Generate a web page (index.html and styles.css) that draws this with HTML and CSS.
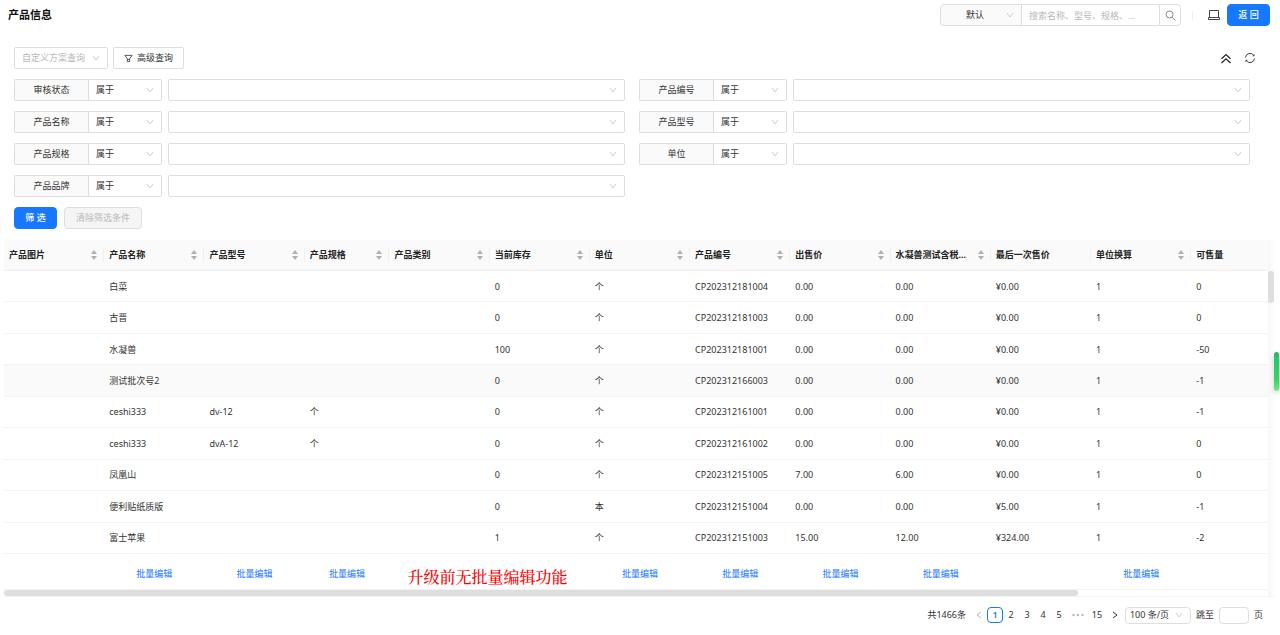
FILE: index.html
```html
<!DOCTYPE html>
<html lang="zh-CN">
<head>
    <meta charset="UTF-8">
    <meta name="viewport" content="width=device-width, initial-scale=1.0">
    <title>产品信息</title>
    <link rel="stylesheet" href="styles.css">
</head>
<body>
    <header class="page-header">
        <h1>产品信息</h1>
        <div class="header-actions">
            <form class="search">
                <select class="select search-type" aria-label="搜索类型">
                    <option>默认</option>
                </select>
                <input class="search-input" type="text" aria-label="搜索" placeholder="搜索名称、型号、规格、...">
                <button class="search-btn" type="button" aria-label="搜索">
                    <svg width="11" height="11" viewBox="0 0 11 11" fill="none" stroke="#888"><circle cx="4.5" cy="4.5" r="3.5"/><path d="M7 7l3.5 3.5"/></svg>
                </button>
            </form>
            <span class="divider"></span>
            <button class="icon-btn" type="button" aria-label="显示设置">
                <svg width="12" height="12" viewBox="0 0 12 12" fill="none" stroke="#444"><path d="M1.5 8.5v-7h9v7M.5 8.500h11v2H.5z"/></svg>
            </button>
            <button class="btn btn-primary" type="button">返 回</button>
        </div>
    </header>

    <section class="filters">
        <div class="filter-bar">
            <select class="select scheme" aria-label="自定义方案查询">
                <option>自定义方案查询</option>
            </select>
            <button class="btn btn-square" type="button">
                <svg width="9" height="9" viewBox="0 0 10 10" fill="none" stroke="#444"><path d="M1 1.500h8L6.300 5.300v3.200H3.700V5.300zM3.700 6h2.600"/></svg>
                高级查询
            </button>
            <div class="filter-tools">
                <button class="icon-btn" type="button" aria-label="收起">
                    <svg width="12" height="12" viewBox="0 0 12 12" fill="none" stroke="#222" stroke-width="1.200"><path d="M1.500 6.700L6 2.500l4.500 4.200M1.500 11L6 6.800l4.500 4.200"/></svg>
                </button>
                <button class="icon-btn" type="button" aria-label="刷新">
                    <svg width="12" height="12" viewBox="0 0 12 12" fill="none" stroke="#444"><path d="M1.500 5.500A4.500 4.500 0 0 1 9.800 3.500M10.500 6.500A4.500 4.500 0 0 1 2.200 8.500"/><path d="M10.500 1.800v2.400H8.200zM1.500 10.200V7.800h2.300z" fill="#444" stroke="none"/></svg>
                </button>
            </div>
        </div>

        <div class="filter-grid" id="filter-grid">
            <!-- Filter rows are added by the script -->
        </div>

        <div class="filter-submit">
            <button class="btn btn-primary" type="button">筛 选</button>
            <button class="btn btn-clear" type="button" disabled>清除筛选条件</button>
        </div>
    </section>

    <main class="table-wrap">
        <table class="products">
            <colgroup>
                <col span="3" class="col">
                <col class="col-narrow">
                <col span="8" class="col">
                <col>
            </colgroup>
            <thead>
                <tr id="table-head"></tr>
            </thead>
            <tbody id="table-body"></tbody>
            <tfoot>
                <tr>
                    <td></td>
                    <td><a href="#">批量编辑</a></td>
                    <td><a href="#">批量编辑</a></td>
                    <td><a href="#">批量编辑</a></td>
                    <td colspan="2" class="note">升级前无批量编辑功能</td>
                    <td><a href="#">批量编辑</a></td>
                    <td><a href="#">批量编辑</a></td>
                    <td><a href="#">批量编辑</a></td>
                    <td><a href="#">批量编辑</a></td>
                    <td></td>
                    <td><a href="#">批量编辑</a></td>
                    <td></td>
                </tr>
            </tfoot>
        </table>
        <div class="scroll-y"><span class="thumb"></span></div>
        <div class="scroll-x"><span class="thumb"></span></div>
    </main>

    <footer class="pagination">
        <span class="total">共1466条</span>
        <button class="page arrow off" type="button" aria-label="上一页" disabled>
            <svg width="6" height="8" viewBox="0 0 6 8" fill="none" stroke="currentColor"><path d="M5 1L1 4l4 3"/></svg>
        </button>
        <button class="page active" type="button">1</button>
        <button class="page" type="button">2</button>
        <button class="page" type="button">3</button>
        <button class="page" type="button">4</button>
        <button class="page" type="button">5</button>
        <button class="page more" type="button" aria-label="向后 5 页">
            <svg width="12" height="4" viewBox="0 0 12 4" fill="#bbb"><circle cx="1.500" cy="2" r="1.200"/><circle cx="6" cy="2" r="1.200"/><circle cx="10.500" cy="2" r="1.200"/></svg>
        </button>
        <button class="page" type="button">15</button>
        <button class="page arrow" type="button" aria-label="下一页">
            <svg width="6" height="8" viewBox="0 0 6 8" fill="none" stroke="currentColor"><path d="M1 1l4 3-4 3"/></svg>
        </button>
        <select class="select page-size" aria-label="每页条数">
            <option>100 条/页</option>
        </select>
        <label for="jump">跳至</label>
        <input class="jump" id="jump" type="text">
        <span>页</span>
    </footer>

    <div class="side-handle"></div>

    <script>
        const filters = ['审核状态', '产品编号', '产品名称', '产品型号', '产品规格', '单位', '产品品牌'];

        // [title, sortable]
        const columns = [
            ['产品图片', true], ['产品名称', true], ['产品型号', true], ['产品规格', true],
            ['产品类别', true], ['当前库存', true], ['单位', true], ['产品编号', true],
            ['出售价', true], ['水凝兽测试含税...', true], ['最后一次售价', false],
            ['单位换算', true], ['可售量', false]
        ];

        const rows = [
            ['', '白菜', '', '', '', '0', '个', 'CP202312181004', '0.00', '0.00', '¥0.00', '1', '0'],
            ['', '古晋', '', '', '', '0', '个', 'CP202312181003', '0.00', '0.00', '¥0.00', '1', '0'],
            ['', '水凝兽', '', '', '', '100', '个', 'CP202312181001', '0.00', '0.00', '¥0.00', '1', '-50'],
            ['', '测试批次号2', '', '', '', '0', '个', 'CP202312166003', '0.00', '0.00', '¥0.00', '1', '-1'],
            ['', 'ceshi333', 'dv-12', '个', '', '0', '个', 'CP202312161001', '0.00', '0.00', '¥0.00', '1', '-1'],
            ['', 'ceshi333', 'dvA-12', '个', '', '0', '个', 'CP202312161002', '0.00', '0.00', '¥0.00', '1', '0'],
            ['', '凤凰山', '', '', '', '0', '个', 'CP202312151005', '7.00', '6.00', '¥0.00', '1', '0'],
            ['', '便利贴纸质版', '', '', '', '0', '本', 'CP202312151004', '0.00', '0.00', '¥5.00', '1', '-1'],
            ['', '富士苹果', '', '', '', '1', '个', 'CP202312151003', '15.00', '12.00', '¥324.00', '1', '-2']
        ];
        const hoveredRow = 3;

        const sorter = '<svg class="sorter" width="6" height="10" viewBox="0 0 6 10" fill="#b0b0b0"><path d="M3 0l3 4H0zM3 10L0 6h6z"/></svg>';

        document.getElementById('filter-grid').innerHTML = filters.map((name, i) => `
            <div class="filter">
                <label for="filter-${i}">${name}</label>
                <select class="select operator" aria-label="${name}条件"><option>属于</option></select>
                <select class="select value" id="filter-${i}"><option></option></select>
            </div>`).join('');

        document.getElementById('table-head').innerHTML = columns.map(([title, sortable]) =>
            `<th><div class="th"><span>${title}</span>${sortable ? sorter : ''}</div></th>`).join('');

        document.getElementById('table-body').innerHTML = rows.map((row, i) =>
            `<tr${i === hoveredRow ? ' class="hover"' : ''}>${row.map(cell => `<td>${cell}</td>`).join('')}</tr>`).join('');
    </script>
</body>
</html>
```

FILE: styles.css
```css
/* styles.css */

* {
    box-sizing: border-box;
}

body {
    display: flex;
    flex-direction: column;
    height: 100vh;
    margin: 0;
    background-color: #fff;
    color: #333;
    font-family: "Noto Sans", "Noto Sans CJK SC", sans-serif;
    font-size: 9px;
    line-height: 14px;
}

button, input, select {
    font: inherit;
    color: inherit;
    margin: 0;
}

button {
    padding: 0;
    cursor: pointer;
}

svg {
    display: block;
    flex: none;
}

a {
    color: #1677ff;
    text-decoration: none;
}

/* Shared controls */
.select {
    height: 22px;
    padding: 0 20px 0 7px;
    border: 1px solid #dedede;
    border-radius: 2px;
    appearance: none;
    background: #fff url('data:image/svg+xml;charset=UTF-8,%3Csvg xmlns="http://www.w3.org/2000/svg" width="8" height="6" viewBox="0 0 8 6"%3E%3Cpath d="M1 1l3 4 3-4" fill="none" stroke="%23cccccc"/%3E%3C/svg%3E') no-repeat right 7px center;
}

.btn {
    display: flex;
    align-items: center;
    justify-content: center;
    gap: 4px;
    height: 22px;
    padding: 0 10px;
    border: 1px solid #dedede;
    border-radius: 4px;
    background-color: #fff;
}

.btn-square {
    border-radius: 2px;
}

.btn-primary {
    min-width: 43px;
    border-color: #1677ff;
    background-color: #1677ff;
    color: #fff;
    font-weight: 500;
}

.btn-clear {
    min-width: 78px;
    background-color: #f5f5f5;
    color: #b8b8b8;
    cursor: not-allowed;
}

.icon-btn {
    border: none;
    background: none;
}

/* Header */
.page-header {
    display: flex;
    align-items: center;
    justify-content: space-between;
    height: 30px;
    padding: 0 10px 0 8px;
}

h1 {
    margin: 0;
    color: #111;
    font-size: 11px;
    font-weight: 700;
}

.header-actions {
    display: flex;
    align-items: center;
}

.search {
    display: flex;
    width: 241px;
}

.search-type {
    width: 82px;
    padding: 0 20px 0 8px;
    border-radius: 4px 0 0 4px;
    background-color: #fafafa;
    text-align-last: center;
}

.search-input {
    flex: 1;
    min-width: 0;
    height: 22px;
    padding: 0 7px;
    border: solid #dedede;
    border-width: 1px 0;
}

.search-input::placeholder {
    color: #b8b8b8;
}

.search-btn {
    display: flex;
    align-items: center;
    justify-content: center;
    width: 22px;
    border: 1px solid #dedede;
    border-radius: 0 4px 4px 0;
    background-color: #fff;
}

.divider {
    width: 1px;
    height: 9px;
    margin: 0 15px 0 11px;
    background-color: #eee;
}

.header-actions .btn {
    margin-left: 7px;
}

/* Filters */
.filters {
    display: flex;
    flex-direction: column;
    gap: 10px;
    padding: 17px 30px 11px 14px;
}

.filter-bar {
    display: flex;
    gap: 5px;
}

.scheme {
    width: 94px;
    color: #b8b8b8;
}

.filter-tools {
    display: flex;
    align-items: center;
    gap: 12px;
    margin-left: auto;
    margin-right: -6px;
}

.filter-grid {
    display: grid;
    grid-template-columns: 1fr 1fr;
    gap: 10px 14px;
}

.filter {
    display: flex;
}

.filter label {
    width: 74px;
    padding: 3px 0;
    border: 1px solid #dedede;
    border-right: none;
    border-radius: 2px 0 0 2px;
    background-color: #fafafa;
    text-align: center;
}

.operator {
    width: 74px;
    border-radius: 0 2px 2px 0;
}

.value {
    flex: 1;
    margin-left: 6px;
}

.filter-submit {
    display: flex;
    gap: 7px;
}

/* Product table */
.table-wrap {
    position: relative;
    flex: 1;
    min-height: 0;
    margin: 0 6px 0 4px;
    padding: 0 6px 6px 0;
    border-bottom: 1px solid #f3f3f3;
}

.products {
    width: 100%;
    height: 100%;
    border-collapse: separate;
    border-spacing: 0;
    table-layout: fixed;
}

.col {
    width: 7.93%;
}

.col-narrow {
    width: 6.7%;
}

.products th {
    height: 31px;
    padding: 0;
    border-bottom: 1px solid #f0f0f0;
    background-color: #fafafa;
    color: #222;
    font-weight: 700;
    text-align: left;
}

.products th:first-child {
    border-top-left-radius: 4px;
}

.th {
    display: flex;
    align-items: center;
    justify-content: space-between;
    gap: 5px;
    padding: 0 6px 0 5px;
    border-right: 1px solid #f0f0f0;
}

.products th:last-child .th {
    border-right: none;
}

.th span {
    white-space: nowrap;
}

.products td {
    padding: 1px 5px 0;
    border-bottom: 1px solid #f3f3f3;
}

.products tr.hover td {
    background-color: #fafafa;
}

.products tfoot td {
    height: 36px;
    padding-top: 5px;
    text-align: center;
}

.products tfoot .note {
    padding: 12px 4px 0 0;
    color: #f00;
    font-family: "Liberation Serif", "Noto Serif CJK SC", "Noto Sans CJK SC", serif;
    font-size: 16px;
    font-weight: 500;
    line-height: 20px;
    white-space: nowrap;
}

/* Scrollbars lie over the edges of the table */
.scroll-y {
    position: absolute;
    top: 0;
    right: 0;
    bottom: 0;
    width: 6px;
    padding-top: 31px;
    background: linear-gradient(to right, #f7f7f7, #fdfdfd);
}

.scroll-x {
    position: absolute;
    left: 0;
    right: 6px;
    bottom: 0;
    height: 6px;
}

.thumb {
    display: block;
    border-radius: 3px;
    background-color: #dedede;
}

.scroll-y .thumb {
    height: 32px;
}

.scroll-x .thumb {
    width: 85%;
    height: 6px;
}

/* Pagination */
.pagination {
    display: flex;
    align-items: center;
    justify-content: flex-end;
    height: 38px;
    padding: 0 17px 2px 0;
}

.page {
    display: flex;
    align-items: center;
    justify-content: center;
    width: 16px;
    height: 16px;
    border: 1px solid transparent;
    border-radius: 4px;
    background: none;
}

.page.active {
    border-color: #1677ff;
    color: #1677ff;
    font-weight: 600;
}

.page.more {
    width: 22px;
}

.page.arrow {
    width: 20px;
}

.page.off {
    width: 16px;
    color: #bbb;
}

.total {
    margin-right: 5px;
}

.page-size {
    width: 66px;
    height: 17px;
    margin-right: 5px;
    padding: 0 16px 0 4px;
    border-radius: 4px;
}

.jump {
    width: 30px;
    height: 17px;
    margin: 0 5px;
    border: 1px solid #dedede;
    border-radius: 4px;
}

/* Green drawer handle on the window edge */
.side-handle {
    position: absolute;
    top: 352px;
    right: 1px;
    width: 5px;
    height: 39px;
    border-radius: 3px;
    background: linear-gradient(#3aa56c, #1fcb6b 15%, #2fd467 70%, #6fee7c);
    box-shadow: 0 2px 5px rgba(0, 0, 0, 0.2);
}
```
